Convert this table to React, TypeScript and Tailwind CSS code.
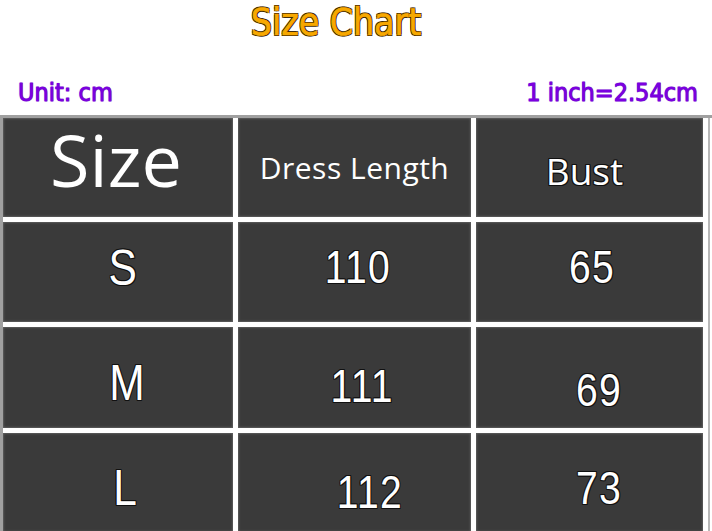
const outline =
  '[text-shadow:-1px_-1px_0_#111,1px_-1px_0_#111,-1px_1px_0_#111,1px_1px_0_#111,0_1px_0_#111,0_-1px_0_#111,1px_0_0_#111,-1px_0_0_#111]';

// narrow look: Liberation Sans squeezed horizontally
const narrow = "font-['Liberation_Sans',sans-serif] scale-x-[0.85] tracking-[1.5px]";

const rows = [
  {
    size: 'S',
    len: '110',
    bust: '65',
    o: ['translate-x-[5px] -translate-y-[4px]', 'translate-x-[3px] -translate-y-[5px]', 'translate-x-[3px] -translate-y-[5px]'],
  },
  {
    size: 'M',
    len: '111',
    bust: '69',
    o: ['translate-x-[10px] translate-y-[5px]', 'translate-x-[8px] translate-y-[8px]', 'translate-x-[10px] translate-y-[12px]'],
  },
  {
    size: 'L',
    len: '112',
    bust: '73',
    o: ['translate-x-[8px] translate-y-[5px]', 'translate-x-[15px] translate-y-[9px]', 'translate-x-[10px] translate-y-[5px]'],
  },
];

function Cell({ children, className = '' }: { children: React.ReactNode; className?: string }) {
  return (
    <div className={'flex items-center justify-center bg-[#3a3a3a] shadow-[inset_0_0_2px_1px_#5e5e5e] ' + className}>
      {children}
    </div>
  );
}

export default function App() {
  return (
    <div className="w-[712px] h-[531px] overflow-hidden bg-white font-['DejaVu_Sans_Condensed','DejaVu_Sans',sans-serif]">
      {/* header */}
      <div className="relative h-[115px]">
        <h1
          className={
            "absolute left-0 right-0 top-[1px] pr-[40px] text-center text-[37px] leading-[44px] text-[#f7a800] [-webkit-text-stroke:0.7px_#f7a800] " +
            '[text-shadow:-1px_-1px_0_#3b2600,1px_-1px_0_#3b2600,-1px_1px_0_#3b2600,1px_1px_0_#3b2600]'
          }
        >
          Size Chart
        </h1>
        <div className="absolute left-0 right-0 top-[78px] flex justify-between px-[18px] pr-[14px] text-[25px] leading-[30px] text-[#7b00e0] [-webkit-text-stroke:0.8px_#7b00e0] [text-shadow:0_0_1px_#2a0050]">
          <span>Unit: cm</span>
          <span>1 inch=2.54cm</span>
        </div>
      </div>

      {/* table */}
      <div className="border-t-[3px] border-l-[3px] border-[#a0a0a0] flex">
        <div className="grid grid-cols-[230px_233px_227px] grid-rows-[99px_100px_101px_99px] gap-x-[5px] gap-y-[5px]">
          <Cell>
            <span className="font-['Open_Sans',sans-serif] text-[72px] leading-none text-white -translate-x-[2px] -translate-y-[9px]">Size</span>
          </Cell>
          <Cell>
            <span className="font-['Open_Sans',sans-serif] text-[30px] tracking-[0.5px] text-white">Dress Length</span>
          </Cell>
          <Cell>
            <span className={"font-['Open_Sans',sans-serif] text-[37px] text-white -translate-x-[5px] translate-y-[3px] " + outline}>
              Bust
            </span>
          </Cell>
          {rows.map((r) => (
            <>
              <Cell key={r.size + 'a'}>
                <span className={narrow + ' text-[50px] leading-none text-white ' + outline + ' ' + r.o[0]}>{r.size}</span>
              </Cell>
              <Cell key={r.size + 'b'}>
                <span className={narrow + ' text-[46px] leading-none text-white ' + outline + ' ' + r.o[1]}>{r.len}</span>
              </Cell>
              <Cell key={r.size + 'c'}>
                <span className={narrow + ' text-[46px] leading-none text-white ' + outline + ' ' + r.o[2]}>{r.bust}</span>
              </Cell>
            </>
          ))}
        </div>
        <div className="ml-[5px] w-[2px] bg-[#b8b8b8]" />
      </div>
    </div>
  );
}
